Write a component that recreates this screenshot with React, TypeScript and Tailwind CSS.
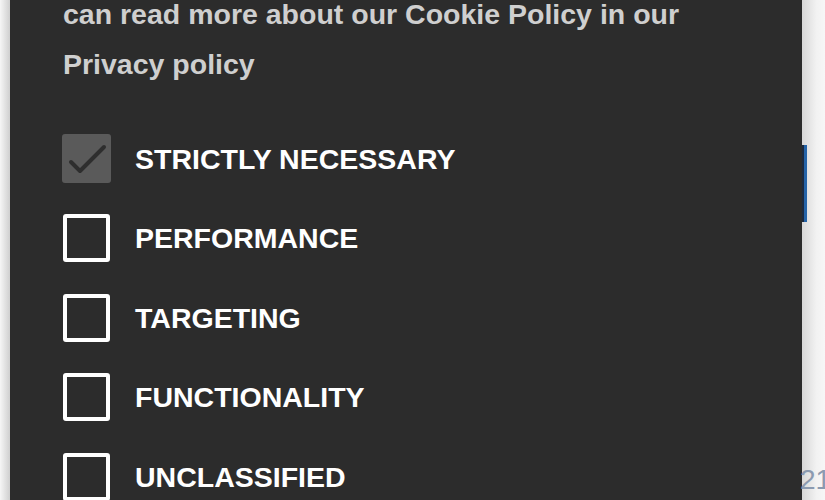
import React from "react";

const options = [
  { label: "STRICTLY NECESSARY", locked: true },
  { label: "PERFORMANCE", locked: false },
  { label: "TARGETING", locked: false },
  { label: "FUNCTIONALITY", locked: false },
  { label: "UNCLASSIFIED", locked: false },
];

const CheckBox = ({ locked }: { locked: boolean }) => {
  return (
    <div className="w-[49px] h-[49px] flex items-center justify-center shrink-0">
      {locked ? (
        <div className="w-[49px] h-[49px] rounded-[3px] bg-[#5a5a5a]">
          <svg width="49" height="49" viewBox="0 0 49 49" fill="none">
            <path d="M9 28 L18 37 L42 13" stroke="#2e2e2e" strokeWidth="4" strokeLinecap="round" strokeLinejoin="round" />
          </svg>
        </div>
      ) : (
        <div className="w-[47px] h-[48px] rounded-[3px] border-[4px] border-white" />
      )}
    </div>
  );
};

const App = () => {
  return (
    <div className="w-[825px] h-[500px] overflow-hidden flex font-['Liberation_Sans',Arial,sans-serif]">
      {/* left page edge */}
      <div className="w-[10px] h-full bg-gradient-to-r from-[#f6f6f6] to-[#cfcfcf] shrink-0" />

      {/* cookie panel */}
      <div className="w-[792px] h-full bg-[#2c2c2c] shrink-0 pl-[52px]">
        <p className="-mt-[11px] ml-[1px] text-[28.5px] leading-[50px] font-bold text-[#cfcfcf] whitespace-nowrap">
          can read more about our Cookie Policy in our
          <br />
          Privacy policy
        </p>
        <div className="mt-[30px] flex flex-col">
          {options.map((item, index) => (
            <div key={index} className="h-[79.5px] flex items-center gap-[24px]">
              <CheckBox locked={item.locked} />
              <span className="text-[28.5px] font-bold text-white leading-none">{item.label}</span>
            </div>
          ))}
        </div>
      </div>

      {/* page behind */}
      <div className="flex-1 h-full bg-gradient-to-r from-[#d8d8d8] via-[#f2f2f2] to-[#fafafa] flex flex-col">
        <div className="mt-[145px] w-[5px] h-[77px] bg-[#2463a8] border-l-[2px] border-[#1b2a40]" />
        <div className="mt-auto mb-[6px] -ml-[2px] text-[28px] leading-none text-[#8b9ab0]">21</div>
      </div>
    </div>
  );
};

export default App;
